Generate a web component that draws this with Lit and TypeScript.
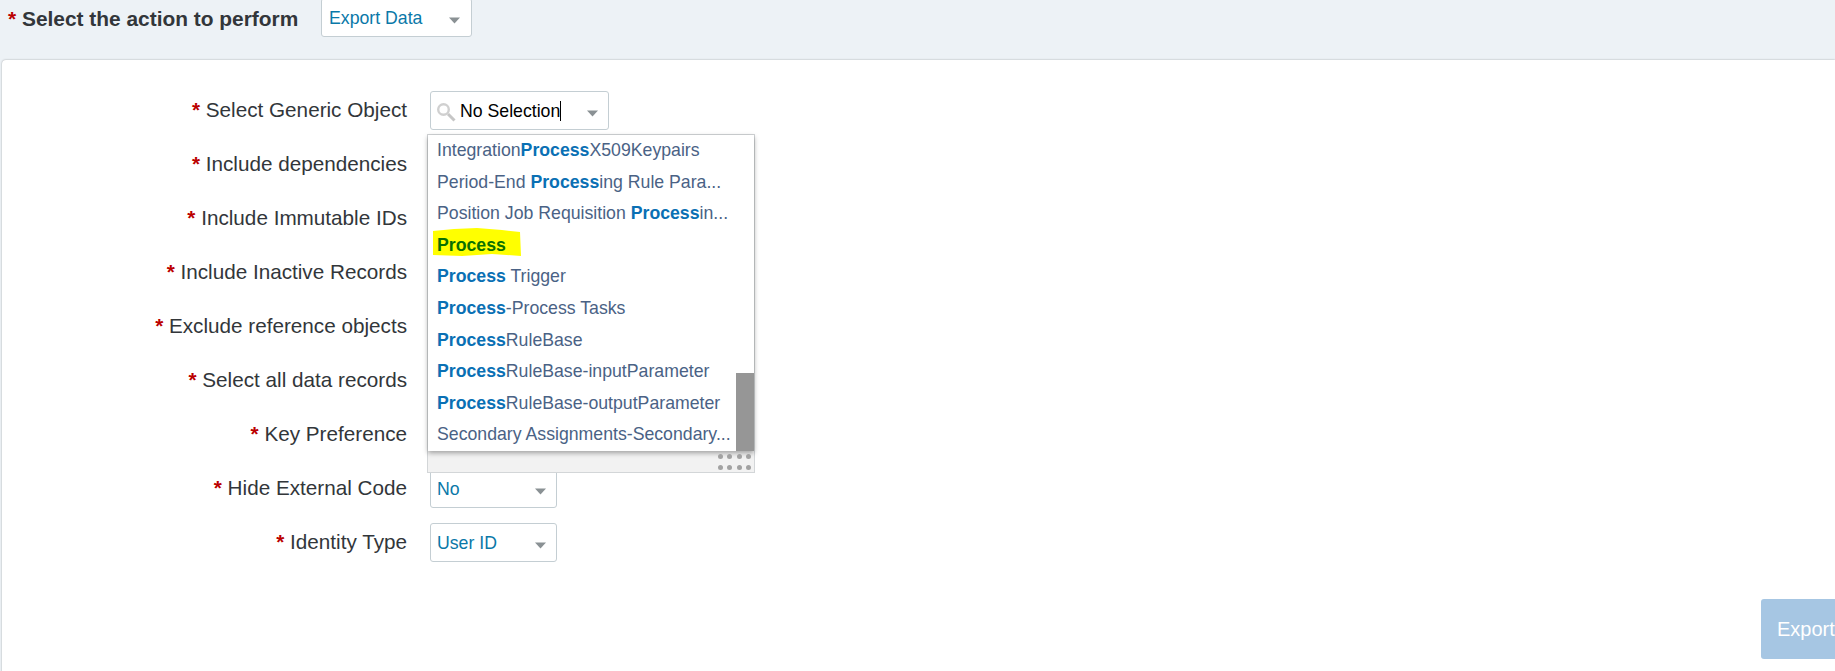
import { LitElement, html, css } from "lit";
import { customElement } from "lit/decorators.js";

const rows: [string, string][] = [
  ["Select Generic Object", ""],
  ["Include dependencies", ""],
  ["Include Immutable IDs", ""],
  ["Include Inactive Records", ""],
  ["Exclude reference objects", ""],
  ["Select all data records", ""],
  ["Key Preference", ""],
  ["Hide External Code", "No"],
  ["Identity Type", "User ID"],
];

const items: [string, string, string][] = [
  ["Integration", "Process", "X509Keypairs"],
  ["Period-End ", "Process", "ing Rule Para..."],
  ["Position Job Requisition ", "Process", "in..."],
  ["", "Process", ""],
  ["", "Process", " Trigger"],
  ["", "Process", "-Process Tasks"],
  ["", "Process", "RuleBase"],
  ["", "Process", "RuleBase-inputParameter"],
  ["", "Process", "RuleBase-outputParameter"],
  ["Secondary Assignments-Secondary...", "", ""],
];

const arrow = html`<svg class="arrow" width="11" height="7" viewBox="0 0 11 7"><path d="M0 .5h11L5.5 6.5z" fill="#8a9194"/></svg>`;

@customElement("app-root")
export class AppRoot extends LitElement {
  static styles = css`
    :host {
      display: block;
      width: 1835px;
      height: 671px;
      overflow: hidden;
      background: #edf2f6;
      font-family: "Liberation Sans", Arial, sans-serif;
      color: #32363a;
      font-size: 20.7px;
    }
    .top {
      height: 60px;
      display: flex;
      align-items: flex-start;
      padding-left: 8px;
      box-sizing: border-box;
    }
    .top .lbl {
      font-weight: 700;
      margin-top: 6px;
      width: 313px;
      white-space: nowrap;
      line-height: 26px;
      font-size: 20.9px;
    }
    .star { color: #b00; font-weight: 700; }
    .sel {
      box-sizing: border-box;
      border: 1px solid #c4ced3;
      border-radius: 3px;
      background: #fff;
      height: 39px;
      display: flex;
      align-items: center;
      justify-content: space-between;
      padding: 1px 10px 0 6px;
      color: #0a78a8;
      font-size: 17.7px;
    }
    .arrow { margin-top: 4px; }
    .sel.action { width: 151px; margin-top: -2px; padding-left: 7px; padding-right: 11px; }
    .card {
      margin-left: 2px;
      background: #fff;
      height: 620px;
      border-radius: 4px 0 0 0;
      box-shadow: 0 0 2px rgba(0, 0, 0, 0.35);
      box-sizing: border-box;
      padding-top: 31px;
      position: relative;
    }
    .form { display: grid; grid-template-columns: 405px 127px; column-gap: 23px; row-gap: 15px; }
    .lab {
      text-align: right;
      white-space: nowrap;
      line-height: 38px;
      font-size: 20.7px;
    }
    .field { position: relative; height: 39px; }
    .search {
      width: 179px;
      color: #000;
      font-size: 17.7px;
    }
    .s-left { display: flex; align-items: center; gap: 3px; margin-left: -1px; }
    .caret { display: inline-block; width: 1px; height: 20px; background: #000; margin-left: -3px; }
    .pop {
      position: absolute;
      left: -3px;
      top: 43px;
      width: 328px;
      height: 339px;
      box-sizing: border-box;
      border: 1px solid #d3d6d8;
      background: #f2f2f2;
      z-index: 5;
    }
    .list {
      position: relative;
      height: 316px;
      background: #fff;
      box-shadow: 0 2px 5px rgba(0, 0, 0, 0.35);
      overflow: hidden;
    }
    .item {
      height: 31.6px;
      line-height: 30px;
      padding-left: 9px;
      white-space: nowrap;
      font-size: 17.7px;
      color: #4a6285;
      position: relative;
    }
    .item b { color: #0a70b4; font-weight: 700; }
    .item.hl b { color: #0a7000; }
    .mark { position: absolute; left: 4px; top: -2px; }
    .txt { position: relative; }
    .thumb { position: absolute; right: 0; top: 238px; width: 18px; height: 78px; background: #969696; }
    .grip {
      position: absolute;
      right: 3px;
      bottom: 2px;
      width: 33px;
      display: grid;
      grid-template-columns: repeat(4, 5px);
      justify-content: space-between;
      row-gap: 6px;
    }
    .grip i {
      width: 5px;
      height: 5px;
      border-radius: 50%;
      background: #a2a2a2;
      filter: blur(0.7px);
    }
    .export {
      position: absolute;
      left: 1759px;
      top: 539px;
      width: 140px;
      height: 60px;
      background: #a6c6e3;
      border-radius: 3px;
      color: #fff;
      font-size: 20px;
      line-height: 60px;
      padding-left: 16px;
      box-sizing: border-box;
    }
  `;

  render() {
    return html`
      <div class="top">
        <div class="lbl"><span class="star">*</span> Select the action to perform</div>
        <div class="sel action"><span>Export Data</span>${arrow}</div>
      </div>
      <div class="card">
        <div class="form">
          ${rows.map(
            ([l, v], i) => html`
              <div class="lab"><span class="star">*</span> ${l}</div>
              <div class="field">
                ${i === 0
                  ? html`<div class="sel search">
                        <span class="s-left">
                          <svg width="21" height="22" viewBox="0 0 21 22" fill="none">
                            <circle cx="7.5" cy="9.5" r="5.3" stroke="#d0d0d0" stroke-width="2.4" />
                            <path d="M12 14l6.5 6.5" stroke="#c6c6c6" stroke-width="3" />
                          </svg>
                          <span>No Selection</span><span class="caret"></span>
                        </span>
                        ${arrow}
                      </div>
                      <div class="pop">
                        <div class="list">
                          ${items.map(
                            ([a, b, c], n) => html`<div class="item ${n === 3 ? "hl" : ""}">
                              ${n === 3
                                ? html`<svg class="mark" width="90" height="31" viewBox="0 0 90 31"><path d="M1 3 L22 1 L45 0 L70 2 L88 4 L89 28 L60 26 L30 28 L1 27 Z" fill="#ffff00"/></svg>`
                                : ""}
                              <span class="txt">${a}<b>${b}</b>${c}</span>
                            </div>`
                          )}
                          <div class="thumb"></div>
                        </div>
                        <div class="grip">${Array.from({ length: 8 }, () => html`<i></i>`)}</div>
                      </div>`
                  : html`<div class="sel"><span>${v}</span>${arrow}</div>`}
              </div>
            `
          )}
        </div>
        <div class="export">Export</div>
      </div>
    `;
  }
}
